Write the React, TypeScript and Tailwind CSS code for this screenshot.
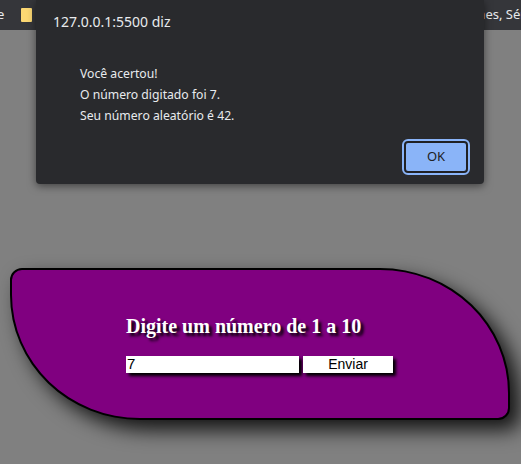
export default function App() {
  return (
    <div className="relative w-[521px] h-[464px] overflow-hidden bg-[#808080]">
      {/* bookmarks bar */}
      <div className="h-[30px] bg-[#35363a] flex items-center text-[13px] text-[#e8eaed] font-['Noto_Sans',sans-serif]">
        <span className="-ml-[3px]">e</span>
        <span className="ml-[17px] w-[11px] h-[14px] bg-[#fcd873] rounded-[1px]" />
        <span className="ml-auto -mr-[8px]">nes, Séri</span>
      </div>

      {/* page */}
      <div className="pt-[238px] pl-[10px]">
        <div className="w-[500px] h-[152px] bg-[#800080] border-2 border-black rounded-[12px_130px_12px_130px/12px_125px_12px_125px] shadow-[10px_10px_20px_rgba(0,0,0,0.85)] flex justify-center">
          <div className="w-[268px] pt-[43px]">
            <h1 className="font-['Liberation_Serif',serif] font-bold text-[20px] leading-[26px] text-white [text-shadow:3px_3px_3px_#000]">
              Digite um número de 1 a 10
            </h1>
            <div className="flex gap-[4px] mt-[17px]">
              <input
                readOnly
                value="7"
                className="w-[173px] h-[17px] bg-white text-black px-[1px] text-[15px] font-['Liberation_Sans',sans-serif] outline-none shadow-[3px_3px_3px_#000]"
              />
              <button className="w-[90px] h-[17px] bg-white text-black text-[14px] leading-[17px] font-['Liberation_Sans',sans-serif] shadow-[3px_3px_3px_#000]">
                Enviar
              </button>
            </div>
          </div>
        </div>
      </div>

      {/* alert dialog */}
      <div className="absolute left-[36px] top-0 w-[448px] h-[184px] bg-[#292a2d] rounded-b-[4px] shadow-[0_2px_8px_rgba(0,0,0,0.5)] font-['Noto_Sans',sans-serif] text-[#e8eaed] flex flex-col">
        <div className="pl-[17px] pt-[12px] text-[14px] leading-[20px]">127.0.0.1:5500 diz</div>
        <div className="pl-[44px] pt-[31px] text-[12.2px] leading-[21px]">
          <p>Você acertou!</p>
          <p>O número digitado foi 7.</p>
          <p>Seu número aleatório é 42.</p>
        </div>
        <div className="flex justify-end pr-[16px] mt-[15px]">
          <button className="w-[64px] h-[32px] rounded-[4px] bg-[#8ab4f8] text-[#202124] text-[13px] border-2 border-[#202124] outline outline-2 outline-[#8ab4f8]">
            OK
          </button>
        </div>
      </div>
    </div>
  );
}
